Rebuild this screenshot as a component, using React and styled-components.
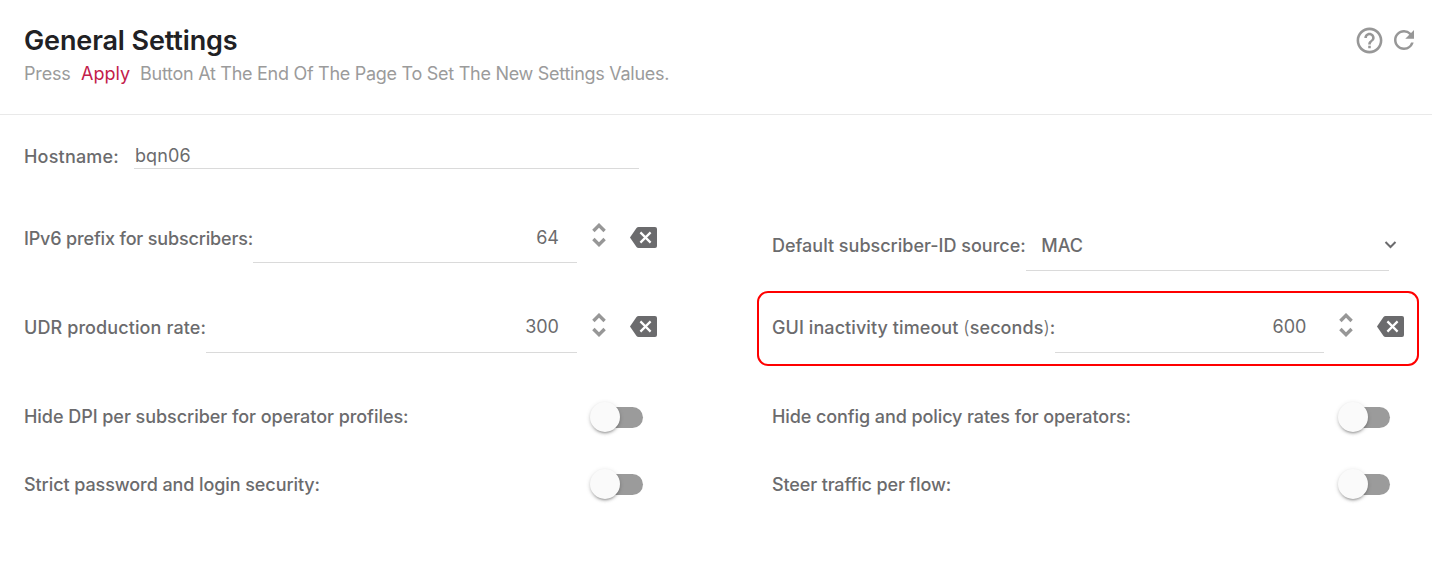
import React from "react"
import styled, { createGlobalStyle } from "styled-components"
import { MdHelpOutline, MdRefresh } from "react-icons/md"

const GlobalStyle = createGlobalStyle`
  * {
    box-sizing: border-box;
  }
  body {
    margin: 0;
    background: #fff;
    color: #6b6b6d;
    font-family: Inter, "Liberation Sans", sans-serif;
    font-size: 18px;
  }
`

const Header = styled.header`
  display: flex;
  justify-content: space-between;
  height: 115px;
  padding: 25px 13px 0 24px;
  border-bottom: 1px solid #e9e9e9;
`

const Title = styled.h1`
  margin: 0;
  color: #212124;
  font-size: 27px;
  font-weight: 600;
  line-height: 32px;
  letter-spacing: -0.13px;
`

const Subtitle = styled.p`
  display: flex;
  margin: 4px 0 0;
  color: #9b9b9b;
  line-height: 26px;
  white-space: nowrap;
`

const SubtitleStart = styled.span`
  width: 47px;
  letter-spacing: -0.15px;
`

const ApplyWord = styled.span`
  margin: 0 10px;
  color: #c3204a;
`

const SubtitleRest = styled.span`
  letter-spacing: -0.28px;
`

const HeaderActions = styled.div`
  display: flex;
  align-items: center;
  gap: 4px;
  height: 30px;
`

const IconButton = styled.button`
  display: flex;
  padding: 0;
  border: 0;
  background: none;
  color: #979797;
`

const ClearButton = styled(IconButton)`
  margin-bottom: ${props => 1 + props.$lift * 2}px;
`

const SettingsGrid = styled.main`
  display: grid;
  grid-template-columns: 757px 662px;
  grid-template-rows: 82px 82px 98px 80px 54px;
  align-items: center;
`

const Field = styled.div`
  display: flex;
  align-items: center;
  grid-column: ${props => props.$column};
  padding-left: ${props => (props.$column === 1 ? 24 : 15)}px;
  margin-top: ${props => props.$drop || 0}px;
`

const HighlightedField = styled(Field)`
  height: 75px;
  padding: 0 0 0 13px;
  border: 2px solid #f00;
  border-radius: 11px;
`

const Label = styled.label`
  flex: none;
  padding-top: ${props => (props.$low ? 2 : 0)}px;
  font-weight: 500;
  line-height: 26px;
  white-space: nowrap;
  letter-spacing: ${props => props.$tracking || 0}px;
`

const Paren = styled.span`
  font-weight: 300;
`

const TextInput = styled.input`
  width: 505px;
  height: 26px;
  margin-left: 15px;
  padding: 0 0 1px 1px;
  border: 0;
  border-bottom: 1px solid #dadada;
  outline: 0;
  background: none;
  color: inherit;
  font: inherit;
  letter-spacing: 0.1px;
`

const NumberInput = styled.input`
  flex: none;
  width: ${props => props.$width}px;
  height: 50px;
  padding: 0 18px ${props => props.$lift * 2}px 0;
  border: 0;
  border-bottom: 1px solid #dadada;
  outline: 0;
  background: none;
  color: inherit;
  font: inherit;
  text-align: right;
`

const Stepper = styled.div`
  display: flex;
  margin: 0 24px 6px 15px;
`

const SelectBox = styled.div`
  display: flex;
  align-items: center;
  justify-content: space-between;
  width: 363px;
  height: 50px;
  padding-left: 15.5px;
  border-bottom: 1px solid #dadada;
  font-weight: 500;
`

const SelectArrow = styled.svg`
  margin-right: -8px;
`

const Toggle = styled.div`
  display: flex;
  align-items: center;
  width: ${props => (props.$column === 1 ? 53 : 52)}px;
  height: 21px;
  margin-left: auto;
  margin-right: ${props => (props.$column === 1 ? 114 : 29)}px;
  border-radius: 11px;
  background: linear-gradient(90deg, transparent 15px, #9b9b9b 15px);
`

const Thumb = styled.span`
  flex: none;
  width: 30px;
  height: 30px;
  border-radius: 50%;
  background: #fafafa;
  box-shadow: 0 3px 2px -2px rgba(0, 0, 0, 0.2), 0 2px 3px rgba(0, 0, 0, 0.14),
    0 1px 5px rgba(0, 0, 0, 0.12);
`

function NumberControl({ value, width, lift = 0 }) {
  return (
    <>
      <NumberInput $width={width} $lift={lift} defaultValue={value} />
      <Stepper>
        <svg width="14" height="24" viewBox="0 0 14 24">
          <path
            d="M1.4 8 7 2.4 12.6 8M1.4 16 7 21.6 12.6 16"
            fill="none"
            stroke="#979797"
            strokeWidth="3.4"
          />
        </svg>
      </Stepper>
      <ClearButton $lift={lift}>
        <svg width="27" height="21" viewBox="0 0 27 21">
          <path
            d="M8.6 0H25a2 2 0 0 1 2 2v17a2 2 0 0 1-2 2H8.6a2.6 2.6 0 0 1-2.1-1.1L0 10.5l6.5-9.4A2.6 2.6 0 0 1 8.6 0Z"
            fill="#6b6b6d"
          />
          <path
            d="m10.4 5.4 10.2 10.2m0-10.2L10.4 15.6"
            stroke="#fff"
            strokeWidth="2.2"
          />
        </svg>
      </ClearButton>
    </>
  )
}

function ToggleField({ column, label, tracking, low }) {
  return (
    <Field $column={column}>
      <Label $tracking={tracking} $low={low}>
        {label}
      </Label>
      <Toggle $column={column}>
        <Thumb />
      </Toggle>
    </Field>
  )
}

export default function App() {
  return (
    <>
      <GlobalStyle />
      <Header>
        <div>
          <Title>General Settings</Title>
          <Subtitle>
            <SubtitleStart>Press</SubtitleStart>
            <ApplyWord>Apply</ApplyWord>
            <SubtitleRest>
              Button At The End Of The Page To Set The New Settings Values.
            </SubtitleRest>
          </Subtitle>
        </div>
        <HeaderActions>
          <IconButton>
            <MdHelpOutline size={31} />
          </IconButton>
          <IconButton>
            <MdRefresh size={30} />
          </IconButton>
        </HeaderActions>
      </Header>
      <SettingsGrid>
        <Field $column={1}>
          <Label $tracking={0.2} $low>
            Hostname:
          </Label>
          <TextInput defaultValue="bqn06" />
        </Field>

        <Field $column={1}>
          <Label $tracking={-0.17} $low>
            IPv6 prefix for subscribers:
          </Label>
          <NumberControl value="64" width={324} />
        </Field>
        <Field $column={2} $drop={15}>
          <Label>Default subscriber-ID source:</Label>
          <SelectBox>
            MAC
            <SelectArrow width="13" height="10" viewBox="0 0 13 10">
              <path
                d="m1.5 2 5 5 5-5"
                fill="none"
                stroke="#6b6b6d"
                strokeWidth="2"
              />
            </SelectArrow>
          </SelectBox>
        </Field>

        <Field $column={1}>
          <Label $tracking={0.1}>UDR production rate:</Label>
          <NumberControl value="300" width={371} lift={1} />
        </Field>
        <HighlightedField $column={2}>
          <Label $tracking={0.08}>
            GUI inactivity timeout <Paren>(</Paren>seconds<Paren>)</Paren>:
          </Label>
          <NumberControl value="600" width={269} lift={1} />
        </HighlightedField>

        <ToggleField
          column={1}
          label="Hide DPI per subscriber for operator profiles:"
          tracking={-0.045}
        />
        <ToggleField
          column={2}
          label="Hide config and policy rates for operators:"
          tracking={-0.09}
        />
        <ToggleField
          column={1}
          label="Strict password and login security:"
          tracking={-0.085}
          low
        />
        <ToggleField
          column={2}
          label="Steer traffic per flow:"
          tracking={-0.14}
          low
        />
      </SettingsGrid>
    </>
  )
}
